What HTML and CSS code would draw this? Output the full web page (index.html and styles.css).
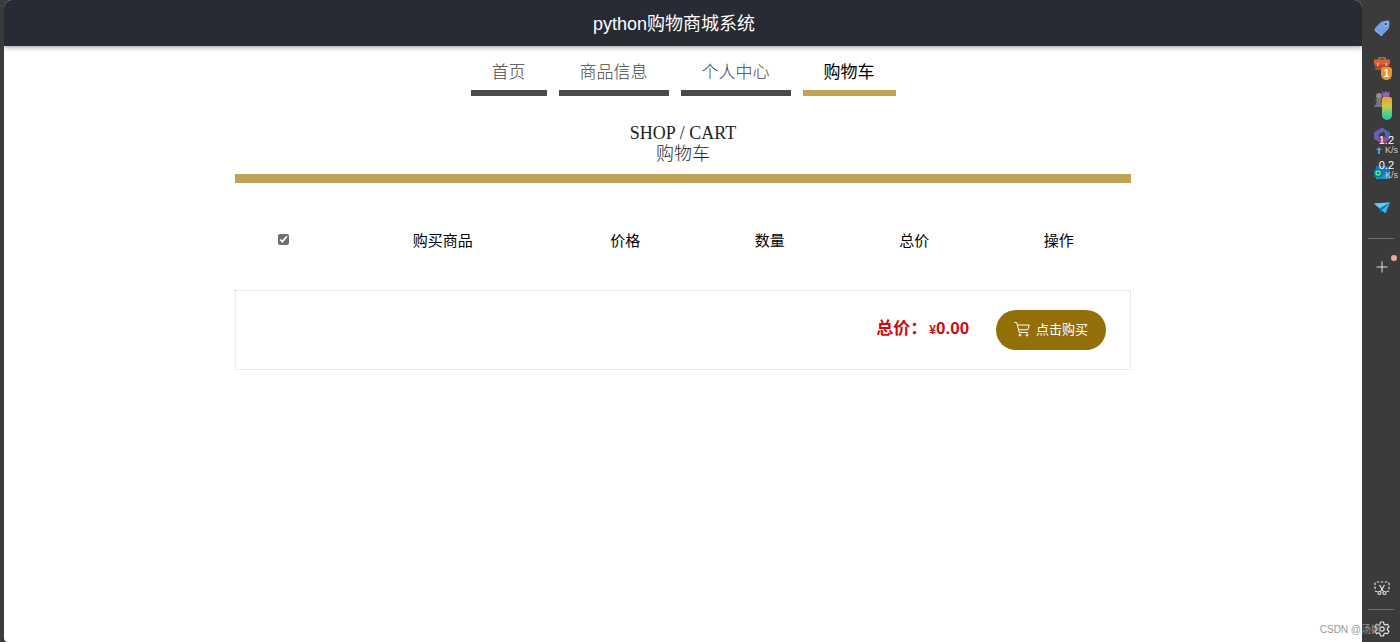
FILE: index.html
```html
<!DOCTYPE html>
<html lang="zh-CN">
<head>
  <meta charset="UTF-8" />
  <meta name="viewport" content="width=device-width, initial-scale=1.0" />
  <title>python购物商城系统</title>
  <link rel="stylesheet" href="styles.css">
</head>
<body>
  <div class="page">
    <header class="topbar">python购物商城系统</header>

    <nav class="menu">
      <a href="#">首页</a>
      <a href="#">商品信息</a>
      <a href="#">个人中心</a>
      <a href="#" class="active">购物车</a>
    </nav>

    <main class="cart">
      <h1 class="cart-title">
        <span>SHOP / CART</span>
        <span class="cart-subtitle">购物车</span>
      </h1>

      <table class="cart-table">
        <thead>
          <tr>
            <th class="col-check"><input type="checkbox" aria-label="全选" checked /></th>
            <th class="col-goods">购买商品</th>
            <th>价格</th>
            <th>数量</th>
            <th>总价</th>
            <th>操作</th>
          </tr>
        </thead>
      </table>

      <div class="total">
        <p class="total-price">总价：<small>¥</small>0.00</p>
        <button type="button" class="buy">
          <svg width="16" height="16" viewBox="0 0 16 16" fill="none" stroke="currentColor">
            <path d="M0.5 1.5h2.2l2.6 10h8.6M3.5 4h11.8l-1.5 4.8H4.7" />
            <circle cx="6" cy="14" r="1" />
            <circle cx="13" cy="14" r="1" />
          </svg>
          点击购买
        </button>
      </div>
    </main>
  </div>

  <aside class="sidebar">
    <button type="button" class="tool" aria-label="购物">
      <svg width="18" height="18" viewBox="0 0 18 18">
        <path d="M9 2.500 15 1.200q1.500 0 1.500 1.500l-.3 5.600q-.1.900-.8 1.600l-5.400 5.600q-1.100 1-2.200 0L2.300 11q-1-1.100 0-2.200l5.300-5.600q.6-.6 1.400-.7z" fill="#6fa0e8" />
        <path d="M1.700 9.600q-.2.800.6 1.400l5.500 4.500q1.100 1 2.200 0l-.8 1.100q-.8.700-1.600 0L2 12q-.8-.8-.3-2.400z" fill="#a9c8f4" />
        <circle cx="12.700" cy="5" r="1.800" fill="#353d50" stroke="#b8d3f7" />
      </svg>
    </button>
    <button type="button" class="tool" aria-label="工具">
      <svg width="18" height="16" viewBox="0 0 18 16">
        <path d="M6 4V1.7h6V4" fill="none" stroke="#a9705a" stroke-width="1.5" />
        <rect x="2" y="6" width="14" height="8" rx="1" fill="#b94925" />
        <path d="M1 4.5q0-1 1-1h14q1 0 1 1v4H1z" fill="#d4633a" />
        <path d="M4 7h1.5v3H4zM12.5 7H14v3h-1.5z" fill="#e7b5a0" />
      </svg>
      <span class="badge">1</span>
    </button>
    <button type="button" class="tool" aria-label="游戏">
      <svg width="18" height="18" viewBox="0 0 18 18">
        <circle cx="6" cy="5" r="3" fill="#8b8d93" />
        <path d="M2.5 8h7v1.5H8l1.5 4.5h1v2h-9v-2h1L4 9.500H2.500z" fill="#74767c" />
        <path d="M9 0l2 2 2-2 2 2 2-2-1 6h-6z" fill="#9365ae" />
      </svg>
      <span class="meter"></span>
    </button>
    <button type="button" class="tool" aria-label="Microsoft 365">
      <svg width="18" height="18" viewBox="0 0 18 18">
        <path d="M8.5 1 2.2 4.6Q1 5.3 1 6.6v5.2l5 3V7.2l5-3V1.800Q10 .2 8.500 1z" fill="#6560b5" />
        <path d="m10 1.2 5.500 3.300Q17 5.400 17 7v4.500l-5-2V6L9 4.300z" fill="#456ba9" />
        <path d="m6 12 6-2.500 5 2-1.200 1.700-5.300 3q-1.500.8-3 0L1 11.800z" fill="#914b9f" />
      </svg>
      <span class="speed"><b>1.2</b><i><svg width="6" height="7" viewBox="0 0 6 7"><path d="M3 0 6 3H4v4H2V3H0z" fill="#35a8ea" /></svg>K/s</i></span>
    </button>
    <button type="button" class="tool" aria-label="Outlook">
      <svg width="18" height="18" viewBox="0 0 18 18">
        <path d="M3 3h12l2 5v8H3z" fill="#1678bd" />
        <path d="m3 8 7 4 7-4v8H3z" fill="#2090cc" />
        <rect x="1" y="6" width="8" height="8" rx="1" fill="#087c83" />
        <circle cx="5" cy="10" r="2" fill="none" stroke="#5df0a2" stroke-width="1.5" />
      </svg>
      <span class="speed speed-down"><b>0.2</b><i>K/s</i></span>
    </button>
    <button type="button" class="tool" aria-label="发送">
      <svg width="18" height="16" viewBox="0 0 18 16">
        <path d="M1 3.5 17 2.500 12.500 13.500 8.500 10.500z" fill="#39b3ec" />
        <path d="M1 3.500 17 2.500 7 8z" fill="#65cdf5" />
        <path d="M7 8 17 2.500 8.500 10.500 7.500 13.500z" fill="#1478b8" />
      </svg>
    </button>
    <hr class="line" />
    <button type="button" class="tool" aria-label="添加">
      <svg width="12" height="12" viewBox="0 0 12 12" stroke="#dedede"><path d="M6 .5v11M.5 6h11" /></svg>
      <span class="dot"></span>
    </button>

    <button type="button" class="tool tool-bottom" aria-label="截图">
      <svg width="16" height="16" viewBox="0 0 16 16" fill="none" stroke="#e2e2e2" stroke-width="1.2">
        <path d="M3.500 11.500H2.500q-1.500 0-1.500-1.500V3.500Q1 2 2.500 2h11Q15 2 15 3.500V10q0 1.500-1.500 1.500h-1" stroke-dasharray="2.500 1.500" />
        <path d="m5.500 5 4 6.500M10.500 5l-4 6.500" />
        <circle cx="5.500" cy="13" r="1.500" />
        <circle cx="10.500" cy="13" r="1.500" />
      </svg>
    </button>
    <hr class="line line-bottom" />
    <button type="button" class="tool tool-settings" aria-label="设置">
      <svg width="16" height="16" viewBox="0 0 16 16" fill="none" stroke="#e2e2e2" stroke-width="1.2" stroke-linejoin="round">
        <path d="M6.500 1h3l.5 2.200 1.300.7 2.200-.7L15 5.700l-1.700 1.600v1.400l1.700 1.600-1.500 2.500-2.200-.7-1.300.7L9.500 15h-3L6 12.800l-1.300-.7-2.200.7L1 10.300l1.700-1.600V7.300L1 5.700l1.500-2.500 2.200.7L6 3.200z" />
        <circle cx="8" cy="8" r="2.200" />
      </svg>
    </button>
  </aside>

  <div class="watermark">CSDN @汤姆</div>
</body>
</html>
```

FILE: styles.css
```css
* {
  box-sizing: border-box;
}

body {
  margin: 0;
  padding-left: 4px;
  display: flex;
  min-height: 100vh;
  position: relative;
  background-color: #3b3b3b;
  font-family: "Liberation Sans", "Noto Sans CJK SC", sans-serif;
  color: #000;
}

.page {
  flex: 1;
  background-color: #fff;
  border-radius: 8px 8px 0 4px;
  overflow: hidden;
}

.topbar {
  height: 46px;
  line-height: 48px;
  padding-right: 18px;
  background-color: #282b33;
  box-shadow: 0 1px 5px rgba(40, 43, 70, 0.5);
  color: #fff;
  font-size: 18px;
  text-align: center;
}

.menu {
  display: flex;
  justify-content: center;
  gap: 12px;
  padding-top: 8px;
}

.menu a {
  padding: 2px 21px 0;
  border-bottom: 6px solid #4b4b4d;
  color: #444;
  font-size: 17px;
  font-weight: 300;
  line-height: 34px;
  text-decoration: none;
}

.menu a.active {
  border-color: #bfa456;
  color: #000;
  font-weight: 400;
}

.cart {
  width: 66%;
  margin: 0 auto;
}

.cart-title {
  display: flex;
  flex-direction: column;
  margin: 0;
  padding: 27px 0 9px;
  border-bottom: 9px solid #bfa456;
  color: #222;
  font-family: "Liberation Serif", "Noto Sans CJK SC", serif;
  font-size: 18px;
  font-weight: 400;
  line-height: 21px;
  text-align: center;
}

.cart-subtitle {
  font-weight: 300;
}

.cart-table {
  width: 100%;
  margin-top: 6px;
  margin-bottom: 1px;
  border-collapse: collapse;
  table-layout: fixed;
}

.cart-table th {
  height: 100px;
  padding: 0;
  font-size: 15px;
  font-weight: 400;
}

.cart-table .col-check {
  width: 98px;
}

.cart-table .col-goods {
  width: 220px;
}

.cart-table input {
  width: 11px;
  height: 11px;
  margin: 0;
  accent-color: #6f6f6f;
}

.total {
  display: flex;
  justify-content: flex-end;
  align-items: center;
  gap: 27px;
  padding: 19px 24px;
  border: 1px dotted #d8d8d8;
}

.total-price {
  margin: 0;
  padding-bottom: 8px;
  color: #c81010;
  font-size: 17px;
  font-weight: bold;
}

.total-price small {
  margin-left: 2px;
  font-size: 12px;
}

.buy {
  display: flex;
  align-items: center;
  gap: 6px;
  height: 40px;
  padding: 0 18px 3px;
  border: none;
  border-radius: 20px;
  background-color: #926f07;
  color: #fff;
  font-family: inherit;
  font-size: 13px;
  cursor: pointer;
}

/* browser side bar */
.sidebar {
  display: flex;
  flex-direction: column;
  width: 38px;
  padding-top: 10px;
}

.tool {
  position: relative;
  display: flex;
  justify-content: center;
  align-items: center;
  height: 36px;
  padding: 0 0 0 2px;
  border: none;
  background: none;
  font-family: inherit;
  cursor: pointer;
}

.line {
  width: 26px;
  margin: 12px auto 10px;
  border: none;
  border-top: 1px solid #6c6c6c;
}

.tool-bottom {
  margin-top: auto;
}

.line-bottom {
  margin: 3px auto 6px;
}

.tool-settings {
  height: 26px;
}

.badge {
  position: absolute;
  right: 8px;
  bottom: 2px;
  width: 11px;
  height: 13px;
  border-radius: 3px 3px 6px 6px;
  background-color: #f09125;
  color: #fff;
  font-size: 10px;
  font-weight: bold;
  line-height: 13px;
}

.meter {
  position: absolute;
  right: 8px;
  bottom: -2px;
  width: 10px;
  height: 23px;
  border-radius: 2px 2px 5px 5px;
  background: linear-gradient(#f09a38, #c9c946 40%, #45d487 75%, #35bfb0);
}

.speed {
  position: absolute;
  right: 2px;
  top: 17px;
  display: flex;
  flex-direction: column;
  color: #fff;
  font-size: 10px;
  line-height: 10px;
}

.speed-down {
  top: 6px;
}

.speed b {
  padding-right: 4px;
  font-size: 11px;
  font-weight: 400;
  text-align: right;
}

.speed i {
  display: flex;
  justify-content: flex-end;
  align-items: center;
  gap: 3px;
  color: #ccc;
  font-size: 9px;
  font-style: normal;
}

.dot {
  position: absolute;
  right: 3px;
  top: 6px;
  width: 6px;
  height: 6px;
  border-radius: 50%;
  background-color: #f4a3a3;
}

.watermark {
  position: absolute;
  right: 19px;
  bottom: 5px;
  color: #999;
  font-size: 10px;
  line-height: 14px;
}
```
